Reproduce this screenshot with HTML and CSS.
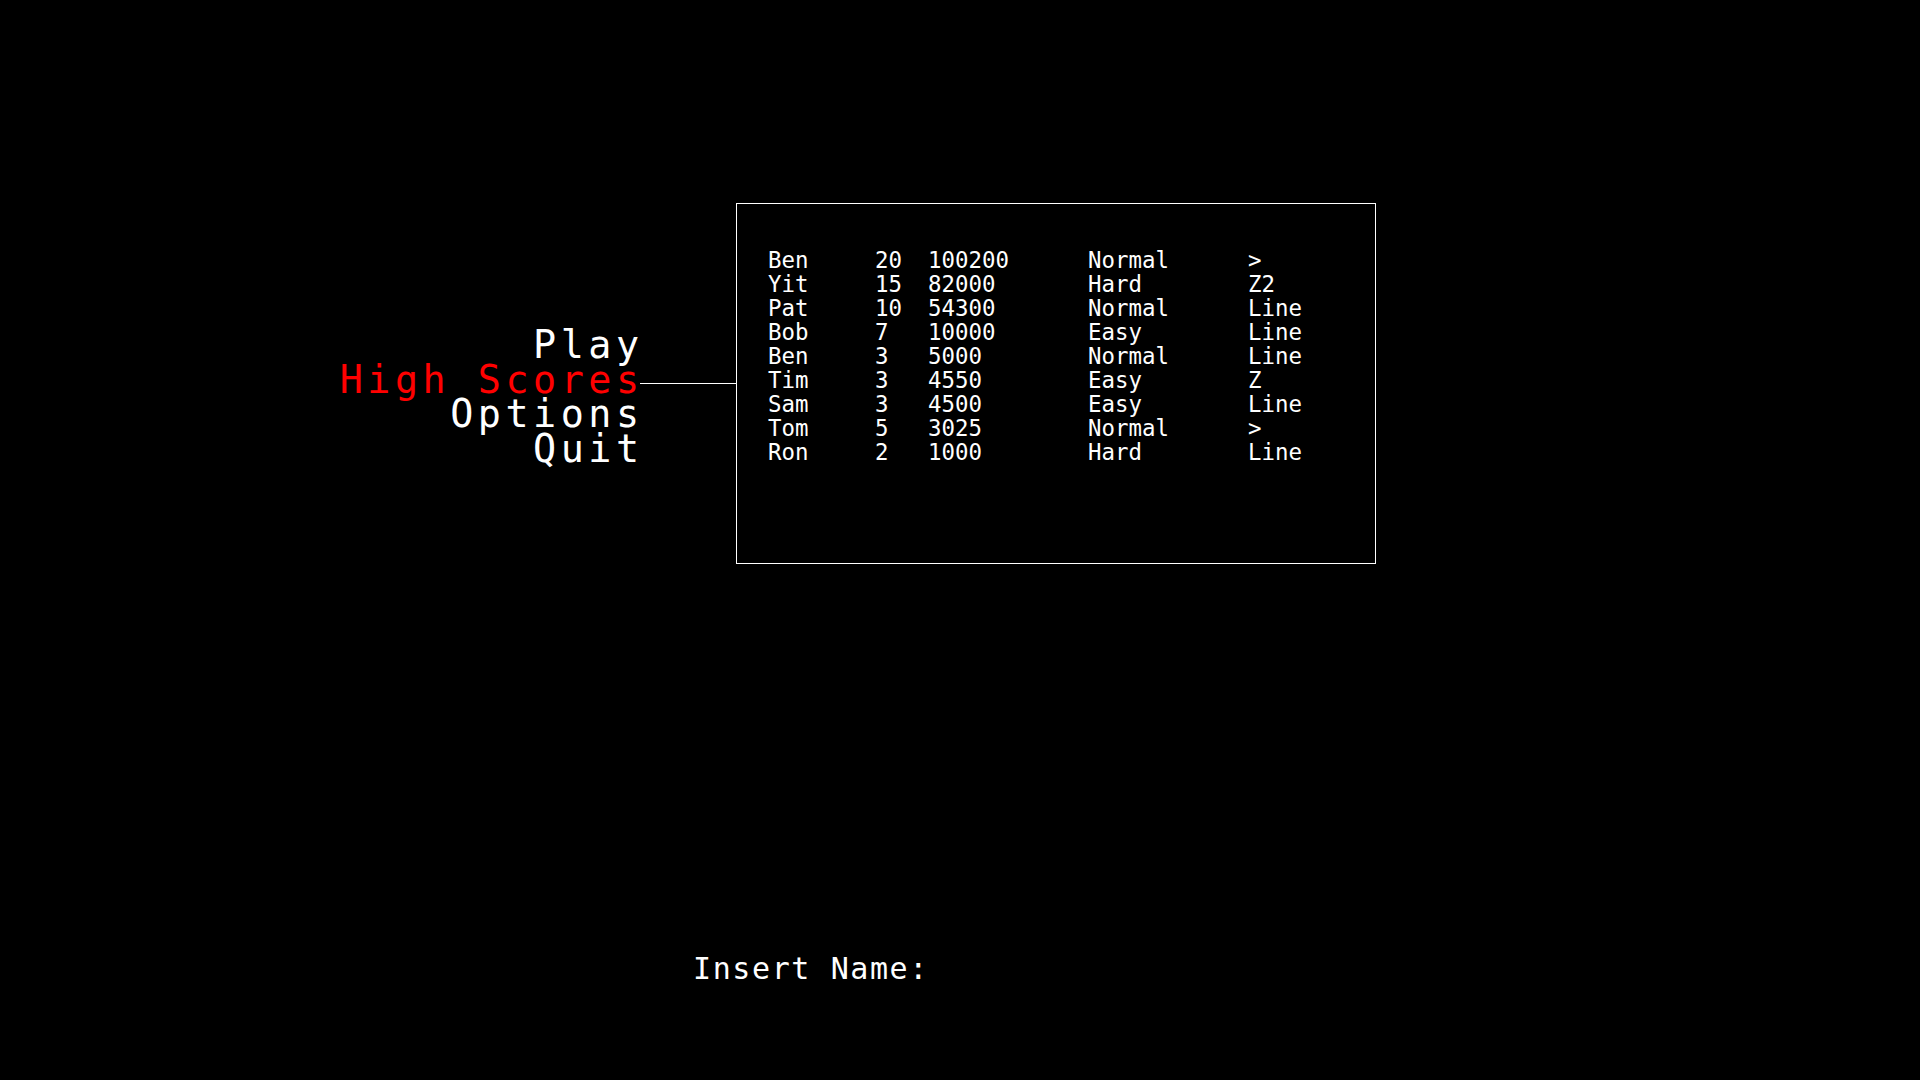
FILE: index.html
```html
<!DOCTYPE html>
<html lang="en">
<head>
<meta charset="utf-8">
<title>High Scores</title>
<link rel="stylesheet" href="styles.css">
</head>
<body>
<div class="screen">
  <div class="stage">
    <nav class="menu">
      <div class="menu-item">Play</div>
      <div class="menu-item active">High Scores</div>
      <div class="menu-item">Options</div>
      <div class="menu-item">Quit</div>
    </nav>
    <div class="connector"></div>
    <section class="scores">
      <div class="row"><span>Ben</span><span>20</span><span>100200</span><span>Normal</span><span>&gt;</span></div>
      <div class="row"><span>Yit</span><span>15</span><span>82000</span><span>Hard</span><span>Z2</span></div>
      <div class="row"><span>Pat</span><span>10</span><span>54300</span><span>Normal</span><span>Line</span></div>
      <div class="row"><span>Bob</span><span>7</span><span>10000</span><span>Easy</span><span>Line</span></div>
      <div class="row"><span>Ben</span><span>3</span><span>5000</span><span>Normal</span><span>Line</span></div>
      <div class="row"><span>Tim</span><span>3</span><span>4550</span><span>Easy</span><span>Z</span></div>
      <div class="row"><span>Sam</span><span>3</span><span>4500</span><span>Easy</span><span>Line</span></div>
      <div class="row"><span>Tom</span><span>5</span><span>3025</span><span>Normal</span><span>&gt;</span></div>
      <div class="row"><span>Ron</span><span>2</span><span>1000</span><span>Hard</span><span>Line</span></div>
    </section>
  </div>
  <div class="insert-name">Insert Name:</div>
</div>
</body>
</html>
```
FILE: styles.css
```css
html, body {
  margin: 0;
  padding: 0;
  background: #000;
}

body {
  color: #fff;
  font-family: "DejaVu Sans Mono", "Liberation Mono", monospace;
}

.screen {
  width: 1920px;
  height: 1080px;
  box-sizing: border-box;
  padding-top: 203px;
  overflow: hidden;
}

.stage {
  display: flex;
  align-items: flex-start;
  padding-left: 240px;
}

.menu {
  width: 400px;
  margin-top: 125px;
  text-align: right;
}

.menu-item {
  font-size: 38.4px;
  line-height: 34.5px;
  letter-spacing: 4.5px;
  margin-right: -3.5px;
  color: #fff;
  white-space: pre;
}

.menu-item.active {
  color: #ff0000;
}

.connector {
  width: 96px;
  height: 1px;
  margin-top: 180px;
  background: #fff;
}

.scores {
  width: 640px;
  height: 361px;
  box-sizing: border-box;
  border: 1px solid #fff;
  padding: 44px 0 0 31px;
}

.row {
  display: grid;
  grid-template-columns: 107px 53px 160px 160px 100px;
  font-size: 22.4px;
  line-height: 24px;
  white-space: pre;
}

.insert-name {
  margin-top: 390px;
  padding-left: 693px;
  font-size: 30px;
  line-height: 30px;
  letter-spacing: 1.6px;
}
```
